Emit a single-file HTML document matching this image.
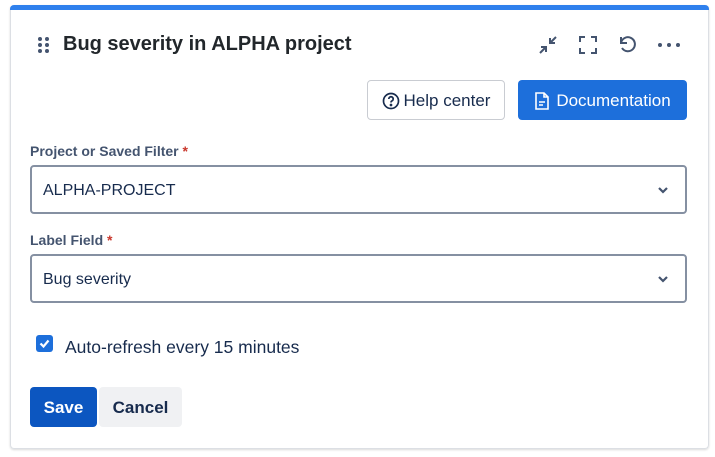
<!DOCTYPE html>
<html><head><meta charset="utf-8"><style>
*{box-sizing:border-box;margin:0;padding:0}
body{width:715px;height:457px;background:#fff;font-family:"Liberation Sans",Arial,sans-serif;position:relative;overflow:hidden;color:#172b4d}
.card{position:absolute;left:10px;top:5px;width:699px;height:444px;border:1px solid #dcdfe4;border-top:none;border-radius:4px;box-shadow:0 1px 2px rgba(0,0,0,.15)}
.bar{position:absolute;left:10px;top:5px;width:699px;height:5px;background:#2f80ed;border-radius:4px 4px 0 0}
.abs{position:absolute}
.title{left:63px;top:33px;font-size:20px;font-weight:bold;color:#22272b}
.btn{position:absolute;border-radius:4px;font-size:17px;display:flex;align-items:center;justify-content:center;padding-top:2px}
.lbl{position:absolute;left:30px;font-size:14px;color:#44546f;font-weight:bold}
.lbl span{color:#c9372c}
.sel{position:absolute;left:30px;width:657px;height:49px;border:2px solid #8590a2;border-radius:4px;font-size:16px;color:#172b4d;padding-left:11px;padding-top:3px;display:flex;align-items:center}
.sel svg{position:absolute;right:16px;top:18px}
</style></head><body>
<div class="card"></div>
<div class="bar"></div>
<svg class="abs" style="left:37px;top:36px" width="14" height="18"><g fill="#44546f"><circle cx="3" cy="3" r="2"/><circle cx="10" cy="3" r="2"/><circle cx="3" cy="9" r="2"/><circle cx="10" cy="9" r="2"/><circle cx="3" cy="15" r="2"/><circle cx="10" cy="15" r="2"/></g></svg>
<div class="abs title">Bug severity in ALPHA project</div>
<svg class="abs" style="left:537px;top:34px" width="22" height="22" fill="none" stroke="#44546f" stroke-width="2"><path d="M3 19l6-6M4 13h5v5M19 3l-6 6M18 9h-5V4"/></svg>
<svg class="abs" style="left:578px;top:35px" width="20" height="20" fill="none" stroke="#44546f" stroke-width="2"><path d="M2 7V2h5M13 2h5v5M18 13v5h-5M7 18H2v-5"/></svg>
<svg class="abs" style="left:617px;top:34px" width="21" height="21" fill="none" stroke="#44546f" stroke-width="2"><path d="M4 9a7 7 0 1 1 1 5"/><path d="M4 3v6h6"/></svg>
<svg class="abs" style="left:656px;top:41px" width="26" height="8" fill="#44546f"><circle cx="4" cy="4" r="2"/><circle cx="13" cy="4" r="2"/><circle cx="22" cy="4" r="2"/></svg>
<div class="btn" style="left:367px;top:80px;width:138px;height:40px;border:1px solid #c9ccd2;color:#172b4d">
<svg width="18" height="18" style="margin-right:4px" fill="none" stroke="#172b4d" stroke-width="1.7"><circle cx="9" cy="9" r="7.5"/><path d="M6.8 7a2.2 2.2 0 1 1 3 2c-.7.3-.8.8-.8 1.5"/><circle cx="9" cy="13" r=".5" fill="#172b4d"/></svg>Help center</div>
<div class="btn" style="left:518px;top:80px;width:169px;height:40px;background:#1d6fdb;color:#fff">
<svg width="16" height="18" style="margin-right:6px" fill="none" stroke="#fff" stroke-width="1.6"><path d="M2 1h8l4 4v12H2z"/><path d="M10 1v4h4M5 10h6M5 13h4"/></svg>Documentation</div>
<div class="lbl" style="top:143px">Project or Saved Filter <span>*</span></div>
<div class="sel" style="top:165px">ALPHA-PROJECT<svg width="12" height="10" fill="none" stroke="#44546f" stroke-width="2.2"><path d="M2 3l4 4 4-4"/></svg></div>
<div class="lbl" style="top:232px">Label Field <span>*</span></div>
<div class="sel" style="top:254px">Bug severity<svg width="12" height="10" fill="none" stroke="#44546f" stroke-width="2.2"><path d="M2 3l4 4 4-4"/></svg></div>
<div class="abs" style="left:36px;top:335px;width:17px;height:17px;background:#1d6fdb;border-radius:3px"><svg width="17" height="17" fill="none" stroke="#fff" stroke-width="2.2"><path d="M4.5 8.5l3 3 5-6"/></svg></div>
<div class="abs" style="left:65px;top:337px;font-size:17.5px;color:#172b4d">Auto-refresh every 15 minutes</div>
<div class="btn" style="left:30px;top:387px;width:67px;height:40px;background:#0c56c0;color:#fff;font-weight:bold">Save</div>
<div class="btn" style="left:99px;top:387px;width:83px;height:40px;background:#f0f1f3;color:#172b4d;font-weight:bold">Cancel</div>
</body></html>
